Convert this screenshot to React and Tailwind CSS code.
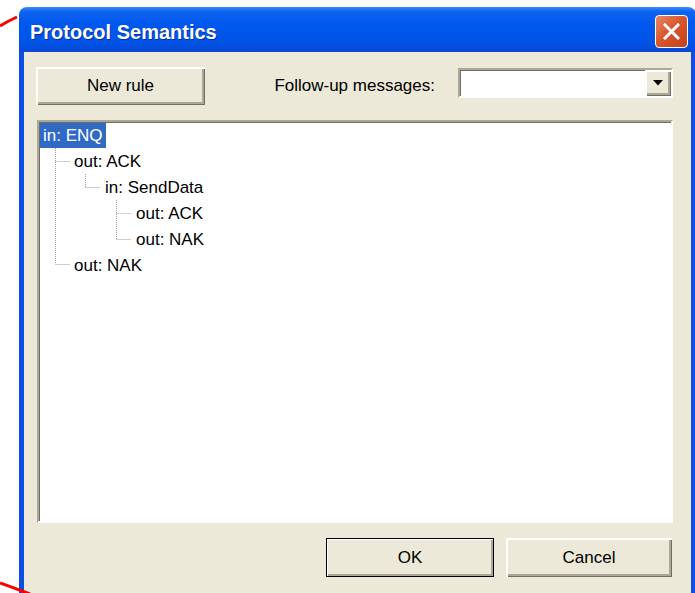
import React from "react";

const font = "font-['Liberation_Sans',Arial,sans-serif]";

// classic raised 3D button
const bevel =
  "bg-[#ECE9D8] shadow-[inset_2px_2px_0_#ffffff,inset_-1px_-1px_0_#716F64,inset_-3px_-3px_0_#ACA899]";

// sunken field border (tree, combo)
const sunken =
  "border-2 border-t-[#ACA899] border-l-[#ACA899] border-b-white border-r-white shadow-[inset_1px_1px_0_#716F64]";

const nodes = [
  { label: "in: ENQ", pad: "pl-[1px]", selected: true },
  { label: "out: ACK", pad: "pl-[32px]" },
  { label: "in: SendData", pad: "pl-[63px]" },
  { label: "out: ACK", pad: "pl-[94px]" },
  { label: "out: NAK", pad: "pl-[94px]" },
  { label: "out: NAK", pad: "pl-[32px]" },
];

const TreeLines = () => (
  <svg
    className="absolute left-0 top-0 pointer-events-none"
    width="200"
    height="160"
    stroke="#9E9E9E"
    strokeWidth="1"
    strokeDasharray="1 1"
    fill="none"
  >
    {/* root children */}
    <path d="M16.5 26V142 M16.5 39.5H31 M16.5 142.5H31" />
    {/* out: ACK -> in: SendData */}
    <path d="M46.5 52V65 M46.5 65.5H61" />
    {/* in: SendData children */}
    <path d="M77.5 78V117 M77.5 91.5H92 M77.5 117.5H92" />
  </svg>
);

const ProtocolSemantics = () => {
  return (
    <div className="w-[677px]">
      {/* title bar */}
      <div className="h-[45px] rounded-t-[8px] flex items-start pl-[11px] pr-[8px] pt-[8px] bg-[linear-gradient(to_bottom,#3D8DFA_0%,#0F64F0_10%,#0058EE_35%,#0055E8_75%,#0848D4_100%)]">
        <span
          className={`${font} text-white font-bold text-[20px] leading-[33px] pt-[1px] [text-shadow:1px_1px_0_#0B2E9A]`}
        >
          Protocol Semantics
        </span>
        <button className="ml-auto w-[33px] h-[33px] rounded-[4px] border-[1.5px] border-white flex items-center justify-center bg-[linear-gradient(135deg,#E8876A_0%,#D9582F_45%,#C2401A_100%)]">
          <svg width="17" height="17" viewBox="0 0 17 17">
            <path
              d="M2 2L15 15M15 2L2 15"
              stroke="#fff"
              strokeWidth="3"
              strokeLinecap="square"
            />
          </svg>
        </button>
      </div>

      {/* client area */}
      <div
        className={`${font} h-[545px] border-x-[5px] border-[#0B4FE3] bg-[#ECE9D8] flex flex-col text-[17px] text-black`}
      >
        <div className="flex items-start mt-[15px] pl-[12px] pr-[18px]">
          <button className={`${bevel} w-[169px] h-[38px]`}>New rule</button>
          <span className="ml-auto leading-[38px]">Follow-up messages:</span>
          <div
            className={`${sunken} ml-[23px] mt-[1px] w-[215px] h-[30px] bg-white flex justify-end`}
          >
            <div
              className={`${bevel} w-[26px] h-full flex items-center justify-center`}
            >
              <svg width="10" height="6" viewBox="0 0 10 6">
                <path d="M0 0H10L5 5.5Z" fill="#000" />
              </svg>
            </div>
          </div>
        </div>

        <div
          className={`${sunken} relative ml-[13px] mt-[15px] w-[636px] h-[403px] bg-white`}
        >
          <TreeLines />
          {nodes.map((n, i) => (
            <div key={i} className={`${n.pad} h-[26px] flex items-center`}>
              <span
                className={`px-[3px] leading-[25px] ${
                  n.selected ? "bg-[#316AC5] text-white" : ""
                }`}
              >
                {n.label}
              </span>
            </div>
          ))}
        </div>

        <div className="flex justify-end gap-[12px] mt-[15px] pr-[19px]">
          <button
            className={`${bevel} w-[168px] h-[39px] outline outline-[1.5px] outline-black -outline-offset-[1.5px]`}
          >
            OK
          </button>
          <button className={`${bevel} w-[166px] h-[39px]`}>Cancel</button>
        </div>
      </div>
    </div>
  );
};

export default function App() {
  return (
    <div className="relative w-[695px] h-[593px] overflow-hidden bg-white pt-[7px] pl-[19px]">
      {/* red annotation arc */}
      <svg
        className="absolute left-0 top-0 pointer-events-none"
        width="695"
        height="593"
        fill="none"
        stroke="#FF0000"
        strokeWidth="3"
      >
        <path d="M0 26Q8 21 17 17" />
        <path d="M0 583Q14 588 30 594" />
      </svg>
      <ProtocolSemantics />
    </div>
  );
}
